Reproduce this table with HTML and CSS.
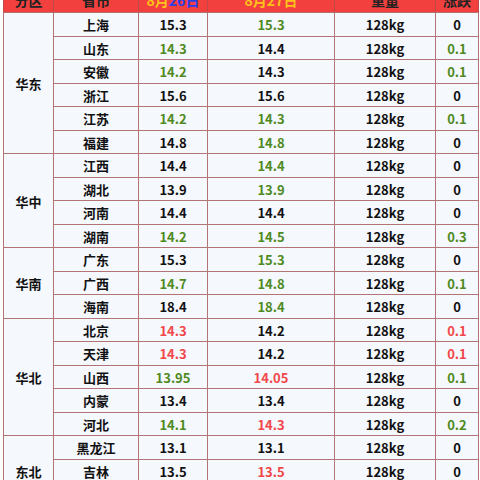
FILE: index.html
```html
<!DOCTYPE html>
<html lang="zh">
<head>
<meta charset="utf-8">
<link rel="stylesheet" href="styles.css">
</head>
<body>
<div class="viewport">
<table class="price">
  <colgroup>
    <col class="c-region"><col class="c-prov"><col class="c-d1"><col class="c-d2"><col class="c-wt"><col class="c-chg">
  </colgroup>
  <thead>
    <tr>
      <th>分区</th>
      <th>省市</th>
      <th><span class="yl">8月</span><span class="bl">26日</span></th>
      <th><span class="yl">8月27日</span></th>
      <th>重量</th>
      <th>涨跌</th>
    </tr>
  </thead>
  <tbody class="grp">
    <tr><td class="region" rowspan="6">华东</td><td>上海</td><td>15.3</td><td class="g">15.3</td><td>128kg</td><td>0</td></tr>
    <tr><td>山东</td><td class="g">14.3</td><td>14.4</td><td>128kg</td><td class="g">0.1</td></tr>
    <tr><td>安徽</td><td class="g">14.2</td><td>14.3</td><td>128kg</td><td class="g">0.1</td></tr>
    <tr><td>浙江</td><td>15.6</td><td>15.6</td><td>128kg</td><td>0</td></tr>
    <tr><td>江苏</td><td class="g">14.2</td><td class="g">14.3</td><td>128kg</td><td class="g">0.1</td></tr>
    <tr><td>福建</td><td>14.8</td><td class="g">14.8</td><td>128kg</td><td>0</td></tr>
  </tbody>
  <tbody class="grp">
    <tr><td class="region" rowspan="4">华中</td><td>江西</td><td>14.4</td><td class="g">14.4</td><td>128kg</td><td>0</td></tr>
    <tr><td>湖北</td><td>13.9</td><td class="g">13.9</td><td>128kg</td><td>0</td></tr>
    <tr><td>河南</td><td>14.4</td><td>14.4</td><td>128kg</td><td>0</td></tr>
    <tr><td>湖南</td><td class="g">14.2</td><td class="g">14.5</td><td>128kg</td><td class="g">0.3</td></tr>
  </tbody>
  <tbody class="grp">
    <tr><td class="region" rowspan="3">华南</td><td>广东</td><td>15.3</td><td class="g">15.3</td><td>128kg</td><td>0</td></tr>
    <tr><td>广西</td><td class="g">14.7</td><td class="g">14.8</td><td>128kg</td><td class="g">0.1</td></tr>
    <tr><td>海南</td><td>18.4</td><td class="g">18.4</td><td>128kg</td><td>0</td></tr>
  </tbody>
  <tbody class="grp">
    <tr><td class="region" rowspan="5">华北</td><td>北京</td><td class="r">14.3</td><td>14.2</td><td>128kg</td><td class="r">0.1</td></tr>
    <tr><td>天津</td><td class="r">14.3</td><td>14.2</td><td>128kg</td><td class="r">0.1</td></tr>
    <tr><td>山西</td><td class="g">13.95</td><td class="r">14.05</td><td>128kg</td><td class="g">0.1</td></tr>
    <tr><td>内蒙</td><td>13.4</td><td>13.4</td><td>128kg</td><td>0</td></tr>
    <tr><td>河北</td><td class="g">14.1</td><td class="r">14.3</td><td>128kg</td><td class="g">0.2</td></tr>
  </tbody>
  <tbody class="grp">
    <tr><td class="region" rowspan="3">东北</td><td>黑龙江</td><td>13.1</td><td>13.1</td><td>128kg</td><td>0</td></tr>
    <tr><td>吉林</td><td>13.5</td><td class="r">13.5</td><td>128kg</td><td>0</td></tr>
    <tr><td>辽宁</td><td>13.4</td><td>13.4</td><td>128kg</td><td>0</td></tr>
  </tbody>
</table>
</div>
</body>
</html>
```
FILE: styles.css
```css
html, body {
  margin: 0;
  padding: 0;
  background: #ffffff;
}
.viewport {
  width: 480px;
  height: 480px;
  overflow: hidden;
}
.price {
  border-collapse: collapse;
  table-layout: fixed;
  width: 475px;
  margin: -12px 0 0 3px;
  font-family: "Noto Sans CJK SC", "Microsoft YaHei", sans-serif;
  font-size: 13px;
  font-weight: bold;
  color: #111111;
}
.c-region { width: 50px; }
.c-prov { width: 85px; }
.c-d1 { width: 69px; }
.c-d2 { width: 127px; }
.c-wt { width: 101px; }
.c-chg { width: 43px; }

.price th {
  background: #f2403e;
  height: 24px;
  padding: 0;
  font-size: 14px;
  font-weight: bold;
  color: #222222;
  border-left: 1px solid #c04848;
  border-right: 1px solid #c04848;
  border-bottom: 1px solid #b07070;
  line-height: 20px;
}
.yl { color: #ffc21a; }
.bl { color: #2a3ee8; }

.price td {
  background: #f5f8fd;
  border: 1px solid #b27474;
  height: 23.5px;
  padding: 2px 0 0;
  box-sizing: border-box;
  text-align: center;
  line-height: 18px;
}
.price td.region {
  vertical-align: middle;
}
.g { color: #4f8a1f; }
.r { color: #f2474a; }
```
